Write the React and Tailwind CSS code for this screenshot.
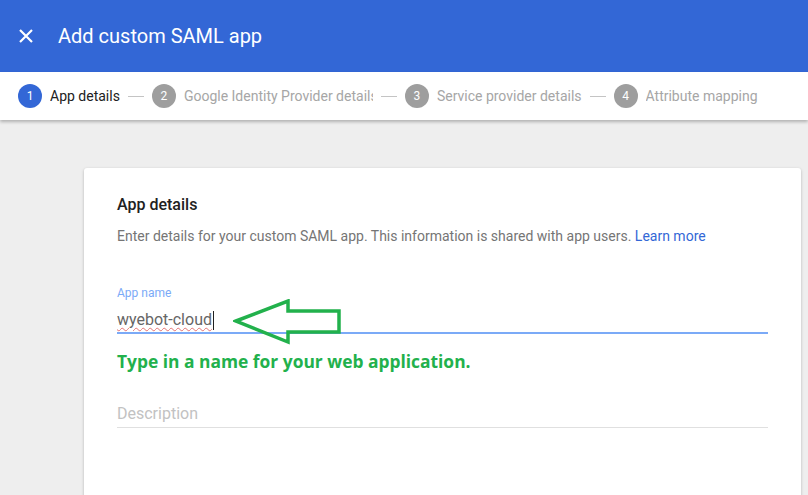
import React from "react";

function Step({ n, label, active, labelClass = "" }) {
  return (
    <div className="flex items-center shrink-0">
      <div
        className={
          "w-6 h-6 rounded-full flex items-center justify-center text-[12px] text-white " +
          (active ? "bg-[#3367d6]" : "bg-[#9e9e9e]")
        }
      >
        {n}
      </div>
      <span
        className={
          "ml-2 text-[14px] whitespace-nowrap overflow-hidden " +
          (active ? "text-[#212121]" : "text-[#a6a6a6]") +
          " " +
          labelClass
        }
      >
        {label}
      </span>
    </div>
  );
}

function Dash() {
  return <div className="w-4 h-px bg-[#c4c4c4] mx-2 shrink-0" />;
}

export default function App() {
  return (
    <div
      className="w-[808px] h-[495px] overflow-hidden flex flex-col bg-[#eeeeee]"
      style={{ fontFamily: "Roboto, 'Liberation Sans', sans-serif" }}
    >
      <div className="h-[72px] bg-[#3367d6] flex items-center shrink-0">
        <svg
          className="ml-[19px]"
          width="14"
          height="14"
          viewBox="0 0 14 14"
          fill="none"
          stroke="white"
          strokeWidth="2.2"
        >
          <path d="M1 1L13 13M13 1L1 13" />
        </svg>
        <span className="ml-[25px] text-white text-[20px]">Add custom SAML app</span>
      </div>
      <div className="h-[48px] bg-white flex items-center pl-[18px] shrink-0 shadow-[0_2px_3px_rgba(0,0,0,0.25)] relative z-10">
        <Step n="1" label="App details" active />
        <Dash />
        <Step n="2" label="Google Identity Provider details" labelClass="w-[189px]" />
        <Dash />
        <Step n="3" label="Service provider details" />
        <Dash />
        <Step n="4" label="Attribute mapping" />
      </div>
      <div className="flex-1 pt-[48px] pl-[84px] pr-[7px]">
        <div className="bg-white rounded-[3px] shadow-[0_1px_3px_rgba(0,0,0,0.25)] h-[400px] px-[33px] pt-[26px]">
          <div className="text-[16px] font-medium text-[#212121] leading-[22px]">App details</div>
          <div className="mt-[10px] text-[14px] text-[#757575] leading-[20px]">
            Enter details for your custom SAML app. This information is shared with app users.{" "}
            <span className="text-[#3367d6]">Learn more</span>
          </div>
          <div className="mt-[40px] text-[12px] text-[#7baaf7] leading-[14px]">App name</div>
          <div className="relative mt-[8px] h-[26px] border-b-2 border-[#7baaf7] flex items-start">
            <span className="text-[16px] text-[#666666] leading-[24px] underline decoration-wavy decoration-[#e57373] decoration-1 underline-offset-2">
              wyebot-cloud
            </span>
            <span className="w-px h-[19px] bg-[#212121] mt-[3px] ml-px" />
            <svg
              className="absolute left-[116px] top-[-9px]"
              width="110"
              height="48"
              viewBox="0 0 110 48"
              fill="none"
            >
              <path
                d="M3 22 L55 2 L55 12 L106 12 L106 33 L55 33 L55 43 Z"
                stroke="#22b14c"
                strokeWidth="3.5"
                strokeLinejoin="miter"
              />
            </svg>
          </div>
          <div
            className="mt-[15px] text-[17.4px] font-bold text-[#22b14c] leading-[24px]"
            style={{ fontFamily: "'Open Sans', 'Noto Sans', sans-serif" }}
          >
            Type in a name for your web application.
          </div>
          <div className="mt-[29px] h-[26px] border-b border-[#e0e0e0] text-[16px] text-[#c2c2c2] leading-[24px]">
            Description
          </div>
        </div>
      </div>
    </div>
  );
}
